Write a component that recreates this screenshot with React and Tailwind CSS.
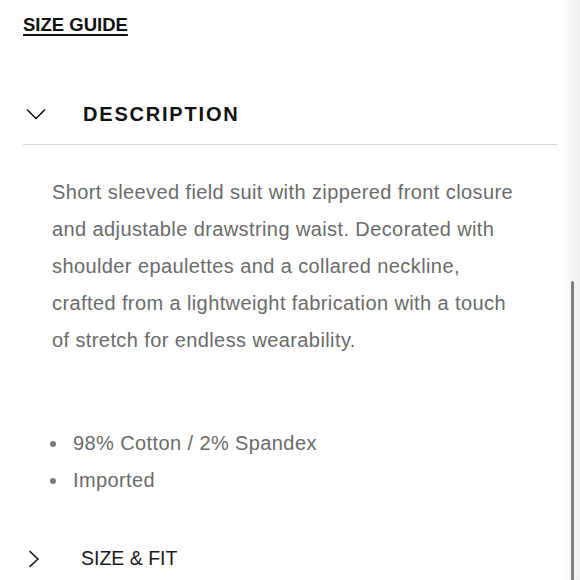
const details = [
  "Short sleeved field suit with zippered front closure",
  "and adjustable drawstring waist. Decorated with",
  "shoulder epaulettes and a collared neckline,",
  "crafted from a lightweight fabrication with a touch",
  "of stretch for endless wearability.",
];

const bullets = ["98% Cotton / 2% Spandex", "Imported"];

const ChevronDown = () => (
  <svg width="20" height="14" viewBox="0 0 20 14" fill="none" className="block">
    <path d="M1.5 3L10 11.5L18.5 3" stroke="#111" strokeWidth="1.6" strokeLinecap="round" strokeLinejoin="round" />
  </svg>
);

const ChevronRight = () => (
  <svg width="12" height="18" viewBox="0 0 12 18" fill="none" className="block">
    <path d="M2 1.5L10 9L2 16.5" stroke="#111" strokeWidth="1.6" strokeLinecap="round" strokeLinejoin="round" />
  </svg>
);

const App = () => {
  return (
    <div className="relative h-[580px] w-[580px] overflow-hidden bg-white font-['Liberation_Sans',Arial,sans-serif]">
      <div className="px-[23px] pt-[15px]">
        <a className="block w-fit text-[18.5px] font-bold leading-[20px] text-[#111] underline decoration-2 underline-offset-[3px]">
          SIZE GUIDE
        </a>

        {/* description accordion */}
        <div className="mt-[59px] flex h-[40px] items-center">
          <span className="ml-[3px] w-[57px]">
            <ChevronDown />
          </span>
          <h3 className="text-[20px] font-bold tracking-[1.8px] text-[#111]">DESCRIPTION</h3>
        </div>
        <div className="mt-[10px] border-t border-[#d6d6d6]" />

        <p className="mt-[29px] pl-[29px] text-[20px] leading-[37px] tracking-[0.4px] text-[#6a6a6a]">
          {details.map((line) => (
            <span key={line} className="block whitespace-nowrap">{line}</span>
          ))}
        </p>

        <ul className="mt-[66px] pl-[27px] text-[20px] leading-[37px] tracking-[0.4px] text-[#6a6a6a]">
          {bullets.map((b) => (
            <li key={b} className="flex items-center">
              <span className="mr-[17px] size-[6px] rounded-full bg-[#7a7a7a]" />
              {b}
            </li>
          ))}
        </ul>

        <div className="mt-[41px] flex h-[37px] items-center">
          <span className="ml-[5px] w-[53px]">
            <ChevronRight />
          </span>
          <span className="text-[19.5px] text-[#1a1a1a]">SIZE &amp; FIT</span>
        </div>
      </div>

      {/* scroll edge + indicator */}
      <div className="absolute inset-y-0 right-0 w-[18px] bg-gradient-to-r from-white to-[#ededed]" />
      <div className="absolute right-[6px] top-[281px] h-[320px] w-[3px] rounded-full bg-[#7f7f7f]" />
    </div>
  );
};

export default App;
